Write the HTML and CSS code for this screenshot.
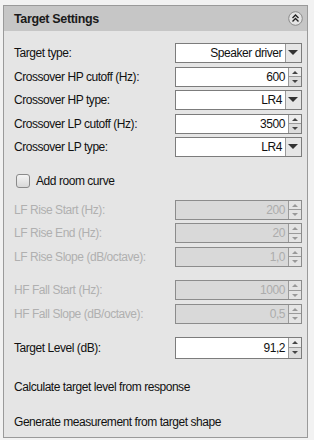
FILE: index.html
```html
<!DOCTYPE html>
<html lang="en">
<head>
    <meta charset="UTF-8">
    <title>Target Settings</title>
    <link rel="stylesheet" href="styles.css">
</head>
<body>
    <div class="panel">
        <div class="header">
            <span class="title">Target Settings</span>
            <span class="collapse">
                <svg width="15" height="15" viewBox="0 0 15 15">
                    <circle cx="7.5" cy="7.5" r="6.8" fill="#e4e4e4" stroke="#8a8a8a"/>
                    <path d="M4.5 7 L7.5 4 L10.5 7 M4.5 10.5 L7.5 7.5 L10.5 10.5" fill="none" stroke="#222" stroke-width="1.4"/>
                </svg>
            </span>
        </div>
        <div class="content">
            <div class="group">
                <div class="row">
                    <span class="label">Target type:</span>
                    <div class="combo"><span class="value">Speaker driver</span><span class="drop"></span></div>
                </div>
                <div class="row">
                    <span class="label">Crossover HP cutoff (Hz):</span>
                    <div class="spin"><span class="value">600</span><span class="buttons"><span class="up"></span><span class="down"></span></span></div>
                </div>
                <div class="row">
                    <span class="label">Crossover HP type:</span>
                    <div class="combo"><span class="value">LR4</span><span class="drop"></span></div>
                </div>
                <div class="row">
                    <span class="label">Crossover LP cutoff (Hz):</span>
                    <div class="spin"><span class="value">3500</span><span class="buttons"><span class="up"></span><span class="down"></span></span></div>
                </div>
                <div class="row">
                    <span class="label">Crossover LP type:</span>
                    <div class="combo"><span class="value">LR4</span><span class="drop"></span></div>
                </div>
            </div>

            <label class="check"><span class="box"></span>Add room curve</label>

            <div class="group disabled lf">
                <div class="row">
                    <span class="label">LF Rise Start (Hz):</span>
                    <div class="spin"><span class="value">200</span><span class="buttons"><span class="up"></span><span class="down"></span></span></div>
                </div>
                <div class="row">
                    <span class="label">LF Rise End (Hz):</span>
                    <div class="spin"><span class="value">20</span><span class="buttons"><span class="up"></span><span class="down"></span></span></div>
                </div>
                <div class="row">
                    <span class="label">LF Rise Slope (dB/octave):</span>
                    <div class="spin"><span class="value">1,0</span><span class="buttons"><span class="up"></span><span class="down"></span></span></div>
                </div>
            </div>

            <div class="group disabled hf">
                <div class="row">
                    <span class="label">HF Fall Start (Hz):</span>
                    <div class="spin"><span class="value">1000</span><span class="buttons"><span class="up"></span><span class="down"></span></span></div>
                </div>
                <div class="row">
                    <span class="label">HF Fall Slope (dB/octave):</span>
                    <div class="spin"><span class="value">0,5</span><span class="buttons"><span class="up"></span><span class="down"></span></span></div>
                </div>
            </div>

            <div class="group level">
                <div class="row">
                    <span class="label">Target Level (dB):</span>
                    <div class="spin"><span class="value">91,2</span><span class="buttons"><span class="up"></span><span class="down"></span></span></div>
                </div>
            </div>

            <div class="action first">Calculate target level from response</div>
            <div class="action">Generate measurement from target shape</div>
        </div>
    </div>
</body>
</html>
```

FILE: styles.css
```css
* {
    margin: 0;
    padding: 0;
    box-sizing: border-box;
}

body {
    background-color: #f2f2f2;
    font-family: "Liberation Sans", Arial, sans-serif;
    font-size: 12px;
    letter-spacing: -0.45px;
    color: #111;
    padding: 5px 6px 2px 3px;
}

.panel {
    border: 1px solid #9a9a9a;
    background-color: #e5e5e5;
    height: 433px;
}

.header {
    height: 25px;
    background-color: #c6c6c6;
    display: flex;
    align-items: center;
    justify-content: space-between;
    padding: 0 4px 0 10px;
}

.title {
    font-weight: bold;
    font-size: 12.5px;
    letter-spacing: -0.35px;
    color: #1a1a1a;
}

.collapse svg {
    display: block;
}

.content {
    padding: 12px 5px 0 10px;
}

.group {
    display: flex;
    flex-direction: column;
    gap: 3.5px;
}

.row {
    display: flex;
    align-items: center;
    justify-content: space-between;
    height: 20px;
}

.combo, .spin {
    width: 127px;
    height: 20px;
    border: 1px solid #7c7c7c;
    background-color: #fff;
    display: flex;
}

.value {
    flex: 1;
    text-align: right;
    padding-right: 3px;
    line-height: 18px;
}

.drop {
    width: 16px;
    border-left: 1px solid #9a9a9a;
    background-color: #e6e6e6;
    position: relative;
}

.drop::after {
    content: "";
    position: absolute;
    left: 2px;
    top: 6px;
    border-left: 5px solid transparent;
    border-right: 5px solid transparent;
    border-top: 5px solid #333;
}

.buttons {
    width: 13px;
    display: flex;
    flex-direction: column;
    border-left: 1px solid #9a9a9a;
}

.up, .down {
    flex: 1;
    position: relative;
    background-color: #ececec;
}

.down {
    border-top: 1px solid #9a9a9a;
    background-color: #dcdcdc;
}

.up::after, .down::after {
    content: "";
    position: absolute;
    left: 3px;
    border-left: 3px solid transparent;
    border-right: 3px solid transparent;
}

.up::after {
    top: 3px;
    border-bottom: 3px solid #444;
}

.down::after {
    top: 3px;
    border-top: 3px solid #444;
}

.check {
    display: flex;
    align-items: center;
    gap: 6px;
    margin: 16px 0 0 2px;
    height: 16px;
}

.box {
    width: 14px;
    height: 14px;
    border: 1px solid #8a8a8a;
    border-radius: 3px;
    background: linear-gradient(#f4f4f4, #d8d8d8);
}

.disabled {
    color: #b0b0b0;
}

.lf {
    margin-top: 10.5px;
}

.hf {
    margin-top: 13.5px;
}

.disabled .spin {
    background-color: #d9d9d9;
    border-color: #8c8c8c;
}

.disabled .value {
    color: #acacac;
}

.disabled .up, .disabled .down {
    background-color: #e4e4e4;
}

.disabled .up::after {
    border-bottom-color: #999;
}

.disabled .down::after {
    border-top-color: #999;
}

.level {
    margin-top: 14px;
}

.level .spin {
    height: 22px;
}

.level .value {
    line-height: 20px;
}

.action {
    margin-top: 19px;
    line-height: 16px;
}

.action.first {
    margin-top: 21px;
}
```
